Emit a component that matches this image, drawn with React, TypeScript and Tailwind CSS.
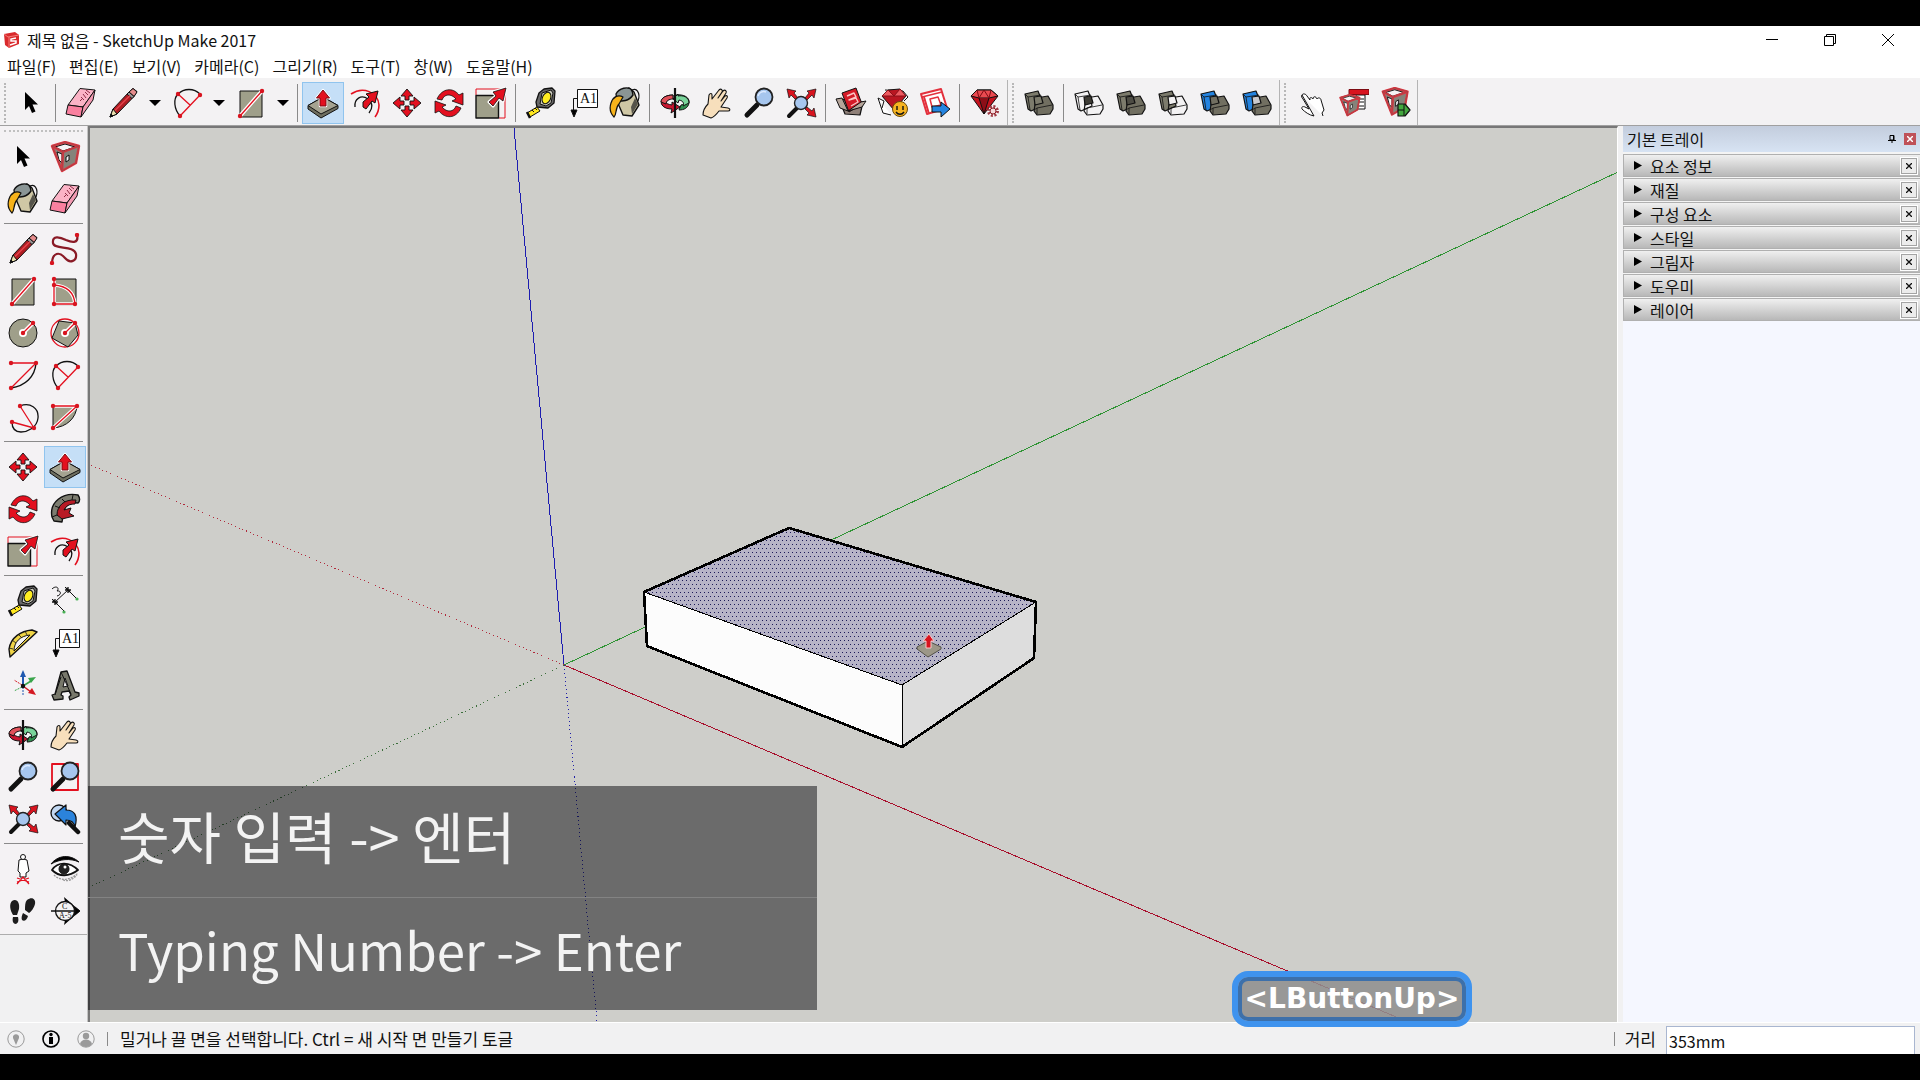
import type { ComponentType, ReactNode } from "react";

const RED = "#e3101f";
const STONE = "#9f9f8a";

function Svg({ children }: { children: ReactNode }) {
  return (
    <svg
      viewBox="0 0 32 32"
      className="h-8 w-8"
      fill="none"
      stroke="#111"
      strokeWidth="1"
      strokeLinejoin="round"
      aria-hidden="true"
    >
      {children}
    </svg>
  );
}

/* Endpoint markers, shared by the drawing tools. */
function Dots({ at }: { at: [number, number][] }) {
  return (
    <>
      {at.map(([x, y]) => (
        <circle key={`${x}-${y}`} cx={x} cy={y} r="2.2" fill="#d8141f" stroke="none" />
      ))}
    </>
  );
}

function Select() {
  return (
    <Svg>
      <path d="M10 5v18l4-4 3 7 3.500-1.500-3-7H23z" fill="#000" stroke="none" />
    </Svg>
  );
}

function Eraser() {
  return (
    <Svg>
      <path d="M15 1.500 30 3 18 20 3 18z" fill="#fbb3c6" />
      <path d="m3 18 15 2-2 10L1 27z" fill="#f9809f" />
      <path d="m30 3-2 10-12 17 2-10z" fill="#f39ab2" />
      <path d="m15 14 2-2m-1-2 3 3m-1-6 3 4m-1-6 3 3m-2-5 4 3" stroke="#8c2d45" />
    </Svg>
  );
}

function Pencil() {
  return (
    <Svg>
      <path d="M22 5 26 1.500 30 4.500 27 9.500 10 27 3 30l3-8z" fill="#b01c22" />
      <path d="m6 22 4 5-7 3z" fill="#eadfae" />
      <path d="m4 27 2 2-3 1z" fill="#111" />
      <path d="m22 5 5 4.500L30 5l-4-3.500z" fill="#e58c8c" />
      <path d="m20 7 5 4.500 2-2L22 5z" fill="#999" />
      <path d="M8 23.500 23 8.500" stroke="#e4434a" strokeWidth="1.500" />
    </Svg>
  );
}

function Freehand() {
  return (
    <Svg>
      <path
        d="M3 29c1-9 7-11 13-4 5 6 12 3 11-4-2-9-22-4-23-11C3 2 11 4 17 7c7 3 13 3 11-5"
        stroke="#8a1a26"
        strokeWidth="2.200"
      />
      <Dots at={[[3, 30], [28, 2]]} />
    </Svg>
  );
}

function Arc() {
  return (
    <Svg>
      <path d="M9 29C3 22 2 12 7 7c6-6 16-6 22 0" strokeWidth="1.300" />
      <path d="M9 29 29 8M7 7l12 11" stroke={RED} strokeWidth="1.300" />
      <Dots at={[[9, 29], [29, 8], [7, 7]]} />
    </Svg>
  );
}

function Rect() {
  return (
    <Svg>
      <path d="M5 4h22v26H5z" fill={STONE} />
      <path d="M5 29 27 4" stroke="#fff" strokeWidth="4" />
      <path d="M5 29 27 4" stroke={RED} strokeWidth="1.300" />
      <Dots at={[[5, 29], [27, 4]]} />
    </Svg>
  );
}

function RotatedRect() {
  return (
    <Svg>
      <path d="M5 4h22v26H5z" fill={STONE} />
      <path d="M5 4v25h21c-1-12-8-18-21-19" stroke="#fff" strokeWidth="3.500" />
      <path d="M5 4v25h21c-1-12-8-18-21-19" stroke={RED} strokeWidth="1.300" />
      <Dots at={[[5, 4], [5, 10], [5, 29], [26, 29]]} />
    </Svg>
  );
}

function Circle() {
  return (
    <Svg>
      <circle cx="16" cy="16" r="14" fill={STONE} />
      <path d="m16 16 10-10" stroke="#fff" strokeWidth="4" />
      <circle cx="16" cy="16" r="4" fill="#fff" stroke="none" />
      <path d="m16 16 10-10" stroke={RED} strokeWidth="1.300" />
      <Dots at={[[16, 16], [26, 6]]} />
    </Svg>
  );
}

function Polygon() {
  return (
    <Svg>
      <circle cx="16" cy="16" r="14" stroke={RED} strokeWidth="1.300" />
      <path d="M10 4 26 6l3 12-10 12L3 21z" fill={STONE} />
      <path d="m16 16 10-10" stroke="#fff" strokeWidth="4" />
      <circle cx="16" cy="16" r="4" fill="#fff" stroke="none" />
      <path d="m16 16 10-10" stroke={RED} strokeWidth="1.300" />
      <Dots at={[[16, 16], [26, 6]]} />
    </Svg>
  );
}

function CenterArc() {
  return (
    <Svg>
      <path d="M29 4c-1 14-11 23-25 25" strokeWidth="1.400" />
      <path d="M4 4h25L4 29" stroke={RED} strokeWidth="1.300" />
      <Dots at={[[4, 4], [29, 4], [4, 29]]} />
    </Svg>
  );
}

function ThreePointArc() {
  return (
    <Svg>
      <path d="M13 5c10-4 19 2 18 12S20 31 14 31 5 27 5 21" strokeWidth="1.300" />
      <path d="M13 5 27 27 5 21" stroke={RED} strokeWidth="1.300" />
      <Dots at={[[13, 5], [27, 27], [5, 21]]} />
    </Svg>
  );
}

function Pie() {
  return (
    <Svg>
      <path d="M4 5h24C27 17 18 26 4 27z" fill={STONE} />
      <path d="M4 5h24L4 27" stroke="#fff" strokeWidth="3.500" />
      <path d="M4 5h24L4 27" stroke={RED} strokeWidth="1.300" />
      <Dots at={[[4, 5], [28, 5], [4, 27]]} />
    </Svg>
  );
}

function PushPull() {
  return (
    <Svg>
      <path d="M1 18.500 16 10l15 8.500v3L14 31 1 22z" fill="#6f6f60" />
      <path d="M1 18.500 16 10l15 8.500L14 27z" fill="#a5a391" />
      <path d="M13 19v-8H9.500L16 3l6.500 8H19v8z" fill={RED} stroke="#fff" strokeWidth="2.500" />
      <path d="M13 19v-8H9.500L16 3l6.500 8H19v8z" fill={RED} stroke="#7d0b12" />
    </Svg>
  );
}

function Offset() {
  return (
    <Svg>
      <path d="M2 7C14-1 29 5 30 18c0 4-1 8-4 12" stroke={RED} strokeWidth="1.600" />
      <path d="M6 20c-1-8 6-13 13-8 5 4 5 9 1 14" strokeWidth="1.300" />
      <path d="m14 15 6-5-3-3 12-3-3 12-3-2-6 8-3-2z" fill={RED} />
    </Svg>
  );
}

function Move() {
  return (
    <Svg>
      <path
        d="M14 13V9h-4l6-7 6 7h-4v4zM14 19v4h-4l6 7 6-7h-4v-4zM13 14H9v-4l-7 6 7 6v-4h4zM19 14h4v-4l7 6-7 6v-4h-4z"
        fill={RED}
        strokeWidth=".9"
      />
    </Svg>
  );
}

function Rotate() {
  return (
    <Svg>
      <path d="M4 12C9 1 20 0 26 8l4-2v12l-11-4 4-2C18 6 11 7 9 13z" fill={RED} strokeWidth=".8" />
      <path d="M28 21c-5 11-16 11-22 3l-4 2V14l11 4-4 2c5 6 12 5 14-1z" fill={RED} strokeWidth=".8" />
    </Svg>
  );
}

function Scale() {
  return (
    <Svg>
      <path d="M1 8V2h29v29H24" stroke={RED} />
      <path d="M1 8.500h22.500V31H1z" fill={STONE} strokeWidth="1.400" />
      <path d="m14 15 7-6-3-4 13-4-3 13-4-3-6 8z" fill={RED} stroke="#fff" strokeWidth="3" />
      <path d="m14 15 7-6-3-4 13-4-3 13-4-3-6 8z" fill={RED} strokeWidth=".8" />
    </Svg>
  );
}

function FollowMe() {
  return (
    <Svg>
      <path d="M3 24C0 9 14-1 29 2c2 3 2 6 0 8-8-1-12 2-14 7l-2 12-8-1z" fill="#7c7c70" strokeWidth="1.400" />
      <path d="M8 22c0-9 7-16 19-15l-1 4c-6 0-9 2-11 6l7-2-2 5 5 3-12 3-5-4z" fill="#b81a25" />
      <path d="m3 24 5-2m-2-9 5 2m2-9 3 3m8-7-1 5" />
    </Svg>
  );
}

function Tape() {
  return (
    <Svg>
      <path d="M14 6 19 2l8-1 3 3-1 12-6 5-11-1-1-5z" fill="#686868" strokeWidth="1.300" />
      <path d="m17 6 9-3 2 3-2 10-5 3-6-2z" fill="#c8c8bb" />
      <ellipse cx="21.500" cy="11" rx="4" ry="6" transform="rotate(25 21.500 11)" fill="#ffed22" />
      <path d="m12 20 3 4L5 30l-3-4z" fill="#ffe71e" />
      <path d="m2 25 3 6" strokeWidth="2.500" />
      <path d="m7 23 2 2m1-4 2 2" />
    </Svg>
  );
}

function Dimension() {
  return (
    <Svg>
      <path d="m6 17 13-12M3 14l12 12M16 2l11 11" />
      <path d="M3 17h6m-3-3v6M16 5h6m-3-3v6M4 15l4 4m9-16 4 4" strokeWidth="1.300" />
      <path d="M3 4c4-4 8-1 5 2 4-1 5 4 0 5" />
      <circle cx="28" cy="14" r="1.600" fill="#48b054" stroke="none" />
      <circle cx="15" cy="27" r="1.600" fill="#48b054" stroke="none" />
    </Svg>
  );
}

function Protractor() {
  return (
    <Svg>
      <path d="M3 30 2 22C4 10 14 4 25 3l5 2z" fill="#efd446" strokeWidth="1.400" />
      <path d="M7 24C7 15 13 9 23 8z" fill="#f4f3f4" />
      <path d="m2 21 4 1m-1-9 4 3m2-9 3 3m4-6 2 4" strokeWidth=".8" />
    </Svg>
  );
}

function TextTool() {
  return (
    <Svg>
      <path d="M10.500 2.500h20v18h-20z" fill="#fff" />
      <path d="M10 11.500H6.500V23" />
      <path d="M4 23h6l-3 7z" fill="#000" />
      <text x="13" y="16" fill="#111" stroke="none" className="font-['Liberation_Serif'] text-[14px]">
        A1
      </text>
    </Svg>
  );
}

function Bucket() {
  return (
    <Svg>
      <path d="M10 6 20 1l5 4 5 13-7 11-9-1L8 14z" fill="#cfc7a5" strokeWidth="1.400" />
      <path d="M7 7c3-6 12-8 16-4l1 5C20 14 13 15 8 13z" fill="#8a9595" strokeWidth="1.400" />
      <path d="m22 20 4-9 3 6-6 10z" fill="#55534a" stroke="none" />
      <path d="M22 4c5-5 10 2 7 10" strokeWidth="1.200" />
      <path d="M14 10C9 7 4 10 2 16c-2 6-1 10 3 14 3-3 1-9 5-13z" fill="#f7b31b" strokeWidth="1.200" />
    </Svg>
  );
}

function Axes() {
  return (
    <Svg>
      <path d="M16 17V6" stroke="#2059b0" strokeWidth="2" />
      <path d="m13 8 3-7 3 7z" fill="#2059b0" stroke="none" />
      <path d="m16 17 8-5" stroke="#3aa54b" strokeWidth="1.500" />
      <path d="m21 9 8-1-5 6z" fill="#3aa54b" stroke="none" />
      <path d="m16 17 8 6" stroke="#d41822" strokeWidth="1.500" />
      <path d="m25 19 4 7-8-2z" fill="#d41822" stroke="none" />
      <path d="M16 18v9" stroke="#2059b0" strokeDasharray="2 1" />
      <path d="m15 18-8 4" stroke="#3aa54b" strokeDasharray="2 1" />
      <path d="m15 16-8-5" stroke="#d41822" strokeDasharray="2 1" />
      <circle cx="16" cy="17" r="2.200" fill="#111" stroke="none" />
    </Svg>
  );
}

function Text3d() {
  return (
    <Svg>
      <path d="m3 26 3-1 6-22 6-1 8 21 4 1v3l-9 4-1-3 2-2-2-4-7 1-1 3 2 1v3l-9 1z" fill="#78786b" strokeWidth="1.300" />
      <path d="m14 18 5-1-3-8z" fill="#f4f2f4" />
      <path d="m12 3 10 22m-16 1 6-18" />
    </Svg>
  );
}

function Orbit() {
  return (
    <Svg>
      <path d="M17 8c7-1 14 2 13 8-1 5-5 7-10 7l2-5c5-1 5-5-4-6z" fill="#2f8f4f" />
      <path d="m19 7-5 5 5 4 1-3c5 1 5 4 4 6l6-3c0-6-6-8-11-7z" fill="#79d49a" />
      <path d="M14 8C5 8 0 13 3 18c2 3 6 4 10 4l-1 4 9-6-8-5v3c-8-1-8-5 1-7z" fill="#c91730" />
      <path d="M14 8C7 8 2 11 2 15l5 2c0-3 3-5 7-5z" fill="#e05059" />
      <path d="M16 1v30" strokeWidth="2.200" />
    </Svg>
  );
}

function Hand() {
  return (
    <Svg>
      <path
        d="M2 28c0-4 2-8 5-11l1-9c1-2 3-2 3 0v4l7-9c2-2 4 0 3 2l-4 6 5-7c2-2 4 0 3 2l-5 8 4-5c2-1 3 0 2 2l-6 9 7 1c3 1 2 3 0 3h-9c-3 4-5 6-8 7z"
        fill="#f7dfbc"
        strokeWidth="1.100"
      />
    </Svg>
  );
}

function Zoom() {
  return (
    <Svg>
      <path d="M14 18 4 28" strokeWidth="5" strokeLinecap="round" />
      <circle cx="21" cy="10" r="8.500" fill="#a6c6ee" stroke="#222" strokeWidth="1.800" />
      <path d="M15 9c1-4 5-5 8-4" stroke="#dceaff" strokeWidth="1.500" />
    </Svg>
  );
}

function ZoomWindow() {
  return (
    <Svg>
      <path d="M3 3h26v26H3z" stroke={RED} strokeWidth="1.800" />
      <path d="M14 18 4 28" strokeWidth="5" strokeLinecap="round" />
      <circle cx="21" cy="10" r="8.500" fill="#a6c6ee" stroke="#222" strokeWidth="1.800" />
    </Svg>
  );
}

function ZoomExtents() {
  return (
    <Svg>
      <path d="M12 21 4 29" strokeWidth="4" strokeLinecap="round" />
      <g fill="#d8141f" strokeWidth=".7">
        <path d="m2 2 9 2-2 2 4 5-2 2-5-5-2 3z" />
        <path d="m31 2-9 2 2 2-4 5 2 2 5-5 2 3z" />
        <path d="m31 30-9-2 2-2-4-4 2-2 5 4 2-3z" />
      </g>
      <circle cx="16" cy="16" r="6.500" fill="#a6c6ee" stroke="#222" strokeWidth="1.400" />
    </Svg>
  );
}

function ZoomPrevious() {
  return (
    <Svg>
      <circle cx="10" cy="10" r="8" fill="#c2d8f2" strokeWidth="1.300" />
      <path d="m20 20 9 9" strokeWidth="4.500" strokeLinecap="round" />
      <path d="m6 11 11-9v5c9 0 12 6 9 17-1-5-4-7-9-7v5z" fill="#2b83dc" strokeWidth="1.200" />
    </Svg>
  );
}

function Warehouse() {
  return (
    <Svg>
      <path d="m4 12 6 15 15 1 3-13z" fill="#8f8078" strokeWidth="1.200" />
      <path d="m7 6 14-5 6 16-13 8z" fill="#d41a27" strokeWidth="1" />
      <path d="m12 9 7-3 2 4-7 3 7-2 2 4-7 4" stroke="#f9c6c6" strokeWidth="1.400" />
      <path d="m1 12 6-1 6 13-8-3zM13 24l14-4 4-6-5 1z" fill="#b5a59a" />
    </Svg>
  );
}

function Extension() {
  return (
    <Svg>
      <path d="m1 11 6 3-2 7m-4-10 5 15 8 2M8 3l18 1 5 6-4 4" fill="#fff" />
      <path d="m5 9 6-6 12-1 6 7-12 14z" fill="#b91621" />
      <path d="M5 9h24l-6-7-6 7-6-6z" fill="#ec5a60" stroke="#8a0f18" />
      <circle cx="23" cy="22" r="7.500" fill="#f6b421" stroke="#6b4a08" />
      <path d="M20 19v4m6-4v4m-7 2c2 3 6 3 8 0" strokeWidth="1.400" />
    </Svg>
  );
}

function Layout() {
  return (
    <Svg>
      <path d="m2 7 20-5 6 19-20 6z" fill="#fff" stroke="#e3303c" strokeWidth="2" />
      <path d="m3 10 20-5M11 12l8-2 3 8-9 2z" stroke="#e3303c" strokeWidth="1.500" />
      <path d="m5 10 5 17" stroke="#e3303c" strokeWidth="2" />
      <path d="M13 19h9v-4l9 7-9 8v-5h-9z" fill="#2484e0" />
    </Svg>
  );
}

function Ruby() {
  return (
    <Svg>
      <path d="m2 9 6-6h14l7 6-14 18z" fill="#c4121e" />
      <path d="m2 9 6-6h14l7 6-9 2H10z" fill="#ea4a50" />
      <path d="m10 11 5 16 5-16" fill="#8d0e17" />
      <path d="m8 3 2 8 5-8 5 8 2-8" stroke="#7d0b12" />
      <circle cx="24" cy="24" r="4.500" stroke="#a03a44" strokeWidth="3" strokeDasharray="2 1.500" fill="#fff" />
      <circle cx="24" cy="24" r="3" stroke="#8c1c25" fill="#f3dadb" />
    </Svg>
  );
}

type SolidProps = { back: string; front: string; middle: string };

function SolidShape({ back, front, middle }: SolidProps) {
  return (
    <Svg>
      <path d="m2 7 13-3 2 5 2 10-11 5-3-2z" fill={back} strokeWidth="1.200" />
      <path d="m2 7 3 3 13-2M5 10l2 13" strokeWidth=".8" />
      <path d="m13 11 12-2 5 9v4l-3 5-13 1-3-4z" fill={front} strokeWidth="1.200" />
      <path d="m11 23 3-2 15-3M14 21v6" strokeWidth=".8" />
      <path d="m11 10 7-1 2 7-8 2z" fill={middle} strokeWidth="1.200" />
    </Svg>
  );
}

const OuterShell = () => <SolidShape back="#7c7b6c" front="#716f61" middle="#7c7b6c" />;
const Intersect = () => <SolidShape back="none" front="none" middle="#3e3d36" />;
const Union = () => <SolidShape back="#7c7b6c" front="#716f61" middle="#4d4c44" />;
const Subtract = () => <SolidShape back="#7c7b6c" front="none" middle="#f4f3f4" />;
const Trim = () => <SolidShape back="#2484e0" front="#716f61" middle="#716f61" />;
const Split = () => <SolidShape back="#2484e0" front="#716f61" middle="#c9c9cc" />;

function Interact() {
  return (
    <Svg>
      <path
        d="M7 8c1-2 4-1 5 1l3 4c-1-3 2-3 3-1 0-3 3-3 4 0 1-2 4-1 4 1l3 10-2 3 1 3m-9 0c-5-1-9-4-12-7-1-2 1-3 3-2l4 2L8 12c-1-1-2-3-1-4z"
        fill="#fff"
        strokeWidth="1"
      />
    </Svg>
  );
}

function CubeFrame() {
  return (
    <>
      <path d="m3 5 13-4 14 4-3 17-14 8z" fill="#85837a" />
      <path d="m6 6 10-3 10 3-12 4z" fill="#f4f3f4" />
      <path d="m8 11 5 2v9l-3-3zM17 16l3-2v5l-3 2z" fill="#f4f3f4" />
      <path d="m3 5 13-4 14 4-3 17-14 8zM3 5l11 6 16-6M14 11l-1 19" stroke="#e0333e" strokeWidth="2.400" />
      <path d="m3 5 13-4 14 4-3 17-14 8zM3 5l11 6 16-6M14 11l-1 19" stroke="#8c4a4c" strokeWidth=".6" />
    </>
  );
}

function MakeComponent() {
  return (
    <Svg>
      <CubeFrame />
    </Svg>
  );
}

function ComponentOptions() {
  return (
    <Svg>
      <path d="M19 8h9v14h-9z" fill="#fff" />
      <path d="M20 12h7m-7 3h7m-7 4h7" />
      <path d="M12 2.500h20v5H12z" fill="#d8141f" stroke="#7d0b12" />
      <g transform="translate(1 7) scale(.72)">
        <CubeFrame />
      </g>
    </Svg>
  );
}

function ComponentAttributes() {
  return (
    <Svg>
      <g transform="translate(1 0) scale(.92)">
        <CubeFrame />
      </g>
      <path d="M19 17h7l5 6-5 6h-7z" fill="#43a83f" strokeWidth="1.200" />
      <path d="M25 17v12m-6-6h6" />
    </Svg>
  );
}

function PositionCamera() {
  return (
    <Svg>
      <path d="m12 7 4-1 4 1 2 11-3 2v4h-6v-4l-2-2z" fill="#fff" />
      <circle cx="16" cy="4" r="2.500" fill="#fff" />
      <path d="m10 31 6-7 6 7M10 25l12 4m0-4-12 4" stroke={RED} strokeWidth="1.200" />
    </Svg>
  );
}

function LookAround() {
  return (
    <Svg>
      <path d="M2 11C9 2 21 1 30 9 21 5 11 6 2 11z" fill="#000" />
      <path d="M3 17c6-9 18-8 26 0-9 7-19 7-26 0z" fill="#fff" strokeWidth="1.800" />
      <circle cx="15" cy="16" r="5" fill="#222" />
      <circle cx="16" cy="14" r="1.500" fill="#fff" stroke="none" />
      <path d="M5 22c7 7 17 5 24-2M14 27c6 2 10-1 14-5" stroke="#999" strokeWidth="1.300" strokeDasharray="2 1" />
    </Svg>
  );
}

function Walk() {
  return (
    <Svg>
      <path
        d="M5 6c5-3 8 2 7 8l-2 6H6C3 15 2 9 5 6zM6 22h5c1 4 0 6-2 7-3 0-4-3-3-7zM20 5c5-4 9-1 8 4-1 4-4 8-6 9l-4-3c0-4 0-8 2-10zM16 18l5 3c-1 4-4 6-6 4-1-2 0-5 1-7z"
        fill="#1d1d1d"
        stroke="none"
      />
    </Svg>
  );
}

function Section() {
  return (
    <Svg>
      <path d="m15 2 16 14-16 14 3-14z" fill="#000" stroke="none" />
      <circle cx="16" cy="16" r="9.500" fill="#f4f3f4" strokeWidth="1.300" />
      <path d="M2 16h28" strokeWidth="1.500" />
      <path d="m26 12 5 4-5 4z" fill="#000" />
      <text x="13" y="14" fill="#111" stroke="none" className="font-['Liberation_Serif'] text-[8px]">
        C
      </text>
      <text x="10" y="23" fill="#111" stroke="none" className="font-['Liberation_Serif'] text-[8px]">
        A-5
      </text>
    </Svg>
  );
}

type Tool = {
  label: string;
  icon: ComponentType;
  active?: boolean;
  menu?: boolean;
};

const MAIN_GROUPS: Tool[][] = [
  [{ label: "선택", icon: Select }],
  [
    { label: "지우개", icon: Eraser },
    { label: "선", icon: Pencil, menu: true },
    { label: "호", icon: Arc, menu: true },
    { label: "직사각형", icon: Rect, menu: true },
  ],
  [
    { label: "밀기/끌기", icon: PushPull, active: true },
    { label: "오프셋", icon: Offset },
    { label: "이동", icon: Move },
    { label: "회전", icon: Rotate },
    { label: "배율", icon: Scale },
  ],
  [
    { label: "줄자", icon: Tape },
    { label: "텍스트", icon: TextTool },
    { label: "페인트통", icon: Bucket },
  ],
  [
    { label: "궤도", icon: Orbit },
    { label: "이동 보기", icon: Hand },
    { label: "확대/축소", icon: Zoom },
    { label: "범위 확대/축소", icon: ZoomExtents },
  ],
  [
    { label: "3D Warehouse", icon: Warehouse },
    { label: "Extension Warehouse", icon: Extension },
    { label: "LayOut", icon: Layout },
  ],
  [{ label: "확장 관리자", icon: Ruby }],
];

const SOLID_GROUPS: Tool[][] = [
  [{ label: "외부 쉘", icon: OuterShell }],
  [
    { label: "교차", icon: Intersect },
    { label: "결합", icon: Union },
    { label: "빼기", icon: Subtract },
    { label: "자르기", icon: Trim },
    { label: "분할", icon: Split },
  ],
];

const DYNAMIC_GROUPS: Tool[][] = [
  [
    { label: "상호 작용", icon: Interact },
    { label: "구성 요소 옵션", icon: ComponentOptions },
    { label: "구성 요소 속성", icon: ComponentAttributes },
  ],
];

const DOCK_GROUPS: Tool[][] = [
  [
    { label: "선택", icon: Select },
    { label: "구성 요소 만들기", icon: MakeComponent },
    { label: "페인트통", icon: Bucket },
    { label: "지우개", icon: Eraser },
  ],
  [
    { label: "선", icon: Pencil },
    { label: "자유형", icon: Freehand },
    { label: "직사각형", icon: Rect },
    { label: "회전된 직사각형", icon: RotatedRect },
    { label: "원", icon: Circle },
    { label: "다각형", icon: Polygon },
    { label: "호", icon: CenterArc },
    { label: "2점 호", icon: Arc },
    { label: "3점 호", icon: ThreePointArc },
    { label: "파이", icon: Pie },
  ],
  [
    { label: "이동", icon: Move },
    { label: "밀기/끌기", icon: PushPull, active: true },
    { label: "회전", icon: Rotate },
    { label: "따라가기", icon: FollowMe },
    { label: "배율", icon: Scale },
    { label: "오프셋", icon: Offset },
  ],
  [
    { label: "줄자", icon: Tape },
    { label: "치수", icon: Dimension },
    { label: "각도기", icon: Protractor },
    { label: "텍스트", icon: TextTool },
    { label: "축", icon: Axes },
    { label: "3D 텍스트", icon: Text3d },
  ],
  [
    { label: "궤도", icon: Orbit },
    { label: "이동 보기", icon: Hand },
    { label: "확대/축소", icon: Zoom },
    { label: "창 확대/축소", icon: ZoomWindow },
    { label: "범위 확대/축소", icon: ZoomExtents },
    { label: "이전", icon: ZoomPrevious },
  ],
  [
    { label: "카메라 배치", icon: PositionCamera },
    { label: "둘러보기", icon: LookAround },
    { label: "걷기", icon: Walk },
    { label: "단면", icon: Section },
  ],
];

const MENUS = ["파일(F)", "편집(E)", "보기(V)", "카메라(C)", "그리기(R)", "도구(T)", "창(W)", "도움말(H)"];

const TRAYS = ["요소 정보", "재질", "구성 요소", "스타일", "그림자", "도우미", "레이어"];

function ToolButton({ tool }: { tool: Tool }) {
  const Icon = tool.icon;
  return (
    <button
      type="button"
      aria-label={tool.label}
      className={`flex h-[42px] w-[42px] shrink-0 items-center justify-center ${
        tool.active ? "border border-[#90c4ee] bg-[#c5dff7]" : ""
      }`}
    >
      <Icon />
    </button>
  );
}

function ToolStrip({ groups }: { groups: Tool[][] }) {
  return (
    <div className="flex h-full items-center border-r border-[#b4b4b4] pr-px">
      <div className="mx-1 h-10 border-l-2 border-dotted border-[#b8b8b8]" />
      {groups.map((group, i) => (
        <div key={i} className="flex items-center">
          {i > 0 && <div className="mr-1 ml-[3px] h-[38px] w-px bg-[#8a8a8a]" />}
          {group.map((tool) => (
            <div key={tool.label} className="flex items-center">
              <ToolButton tool={tool} />
              {tool.menu && (
                <button
                  type="button"
                  aria-label={`${tool.label} 메뉴`}
                  className="flex h-10 w-[22px] items-center justify-center"
                >
                  <svg viewBox="0 0 12 6" className="h-1.5 w-3">
                    <path d="M0 0h12L6 6z" />
                  </svg>
                </button>
              )}
            </div>
          ))}
        </div>
      ))}
    </div>
  );
}

function TitleBar() {
  return (
    <header className="flex h-7 shrink-0 items-center bg-white pl-[3px]">
      <svg viewBox="0 0 18 18" className="h-[18px] w-[18px]">
        <path d="m1 3 11-2 4 3v9l-10 4-4-3z" fill="#d92a2c" />
        <path d="m1 3 4 3 11-2M6 6v11" stroke="#f47c78" fill="none" />
        <path d="M13 7 8 8v2h5v2l-6 2" stroke="#fff" strokeWidth="1.500" fill="none" />
      </svg>
      <h1 className="ml-1.5 flex-1 text-[16px]">제목 없음 - SketchUp Make 2017</h1>
      <button type="button" aria-label="최소화" className="flex h-7 w-[58px] items-center justify-center">
        <svg viewBox="0 0 12 12" className="h-3 w-3" stroke="#000">
          <path d="M0 5.500h12" />
        </svg>
      </button>
      <button type="button" aria-label="이전 크기로" className="flex h-7 w-[58px] items-center justify-center">
        <svg viewBox="0 0 12 12" className="h-3 w-3" stroke="#000" fill="none">
          <path d="M.5 2.500h9v9h-9zM2.500 2.500v-2h9v9h-2" />
        </svg>
      </button>
      <button type="button" aria-label="닫기" className="mr-[3px] flex h-7 w-[58px] items-center justify-center">
        <svg viewBox="0 0 12 12" className="h-3 w-3" stroke="#000">
          <path d="m0 0 12 12M12 0 0 12" />
        </svg>
      </button>
    </header>
  );
}

function Dock() {
  return (
    <aside className="w-[88px] shrink-0 border-r border-[#c4c4c4]">
      <div className="border-b border-[#adadad] bg-[#f4f2f4] px-0.5 pb-0.5">
        <div className="flex h-2.5 items-center px-0.5">
          <div className="w-full border-t-2 border-dotted border-[#c0c0c0]" />
        </div>
        {DOCK_GROUPS.map((group, i) => (
          <div key={i}>
            {i > 0 && <div className="mx-0.5 mt-[3px] mb-1 h-px bg-[#8a8a8a]" />}
            <div className="grid grid-cols-2">
              {group.map((tool) => (
                <ToolButton key={tool.label} tool={tool} />
              ))}
            </div>
          </div>
        ))}
      </div>
    </aside>
  );
}

function Scene() {
  return (
    <svg
      viewBox="90 128 1527 894"
      preserveAspectRatio="xMinYMin slice"
      shapeRendering="crispEdges"
      className="absolute inset-0 h-full w-full"
      fill="none"
      aria-hidden="true"
    >
      <defs>
        <pattern id="selected" width="4" height="8" patternUnits="userSpaceOnUse">
          <rect width="4" height="8" fill="#b7b4c7" />
          <rect width="1" height="1" fill="#1c1a58" />
          <rect x="2" y="4" width="1" height="1" fill="#1c1a58" />
        </pattern>
      </defs>
      <path d="m564 665 1054-493" stroke="#2f9434" />
      <path d="m564 665 844 357" stroke="#a80f2c" />
      <path d="M564 665 514 128" stroke="#1c1cb0" />
      <path d="M564 665 90 465" stroke="#b02a3c" strokeDasharray="1 3" />
      <path d="M564 665 90 887" stroke="#3c6f3c" strokeDasharray="1 3" />
      <path d="m564 665 33 357" stroke="#2020a8" strokeDasharray="1 3" />
      <path d="m644 592 258 93v62L647 646z" fill="#fcfcfc" />
      <path d="m902 685 134-83-2 56-132 89z" fill="#dddddd" />
      <path d="m644 592 145-64 247 74-134 83z" fill="url(#selected)" />
      <path d="m644 592 258 93 134-83M902 685v62" stroke="#000" />
      <path
        d="m644 592 145-64 247 74-2 56-132 89-255-101z"
        stroke="#000"
        strokeWidth="2.600"
        strokeLinejoin="round"
      />
      <g shapeRendering="auto">
        <path d="m917 647 11-6 13 6v2l-13 8-11-8z" fill="#9c9788" stroke="#55534a" />
        <path d="M926 648v-7h-3l6-7 5 7h-3v7z" fill="#d8141f" stroke="#f6c9c9" />
      </g>
    </svg>
  );
}

function Viewport() {
  return (
    <main className="relative min-w-0 flex-1 border-t-2 border-r border-l-2 border-[#777777] border-r-white bg-[#cececa]">
      <Scene />
      <div className="absolute -left-0.5 bottom-3 w-[729px] max-w-full divide-y divide-[#838383] bg-[#08080c7f] text-[#f3f3f3]">
        <p className="flex h-28 items-center px-[30px] pb-3.5 text-[56px]">숫자 입력 -&gt; 엔터</p>
        <p className="flex h-28 items-center px-[30px] pb-2.5 text-[51px]">Typing Number -&gt; Enter</p>
      </div>
      <div className="absolute right-[145px] -bottom-[5px] flex h-14 w-60 items-center justify-center rounded-2xl border-[6px] border-[#3f93ee] bg-[#8f8f8fdd] font-['DejaVu_Sans',sans-serif] text-[28px] font-bold text-white inset-ring-4 inset-ring-[#3d70aa]">
        &lt;LButtonUp&gt;
      </div>
    </main>
  );
}

function Tray() {
  return (
    <aside className="ml-[5px] w-[297px] shrink-0 bg-[#f5f7ff]">
      <div className="flex h-[26px] items-center bg-linear-to-b from-[#c3cddd] to-[#d7e3f3] pr-1 pl-1">
        <h2 className="flex-1 text-[16px] leading-5">기본 트레이</h2>
        <button type="button" aria-label="고정" className="mr-2">
          <svg viewBox="0 0 8 8" className="h-2 w-2" fill="none" stroke="#000">
            <path d="M2 .5h4V5H2zM5.500 0v5M0 5.500h8M4 5v3" />
          </svg>
        </button>
        <button type="button" aria-label="트레이 닫기" className="flex h-3 w-3 items-center justify-center bg-[#bf5158]">
          <svg viewBox="0 0 6 6" className="h-1.5 w-1.5" stroke="#fff" strokeWidth="1.500">
            <path d="m0 0 6 6M6 0 0 6" />
          </svg>
        </button>
      </div>
      <div className="space-y-px bg-[#f4f4f4] pt-0.5">
        {TRAYS.map((name) => (
          <section
            key={name}
            className="flex h-[23px] items-center border border-r-0 border-[#b0b0b0] bg-linear-to-b from-[#f0f0f0] to-[#b8b8b8] pr-[3px]"
          >
            <button type="button" className="flex flex-1 items-center gap-2 pl-2.5 text-left text-[16px] leading-5">
              <svg viewBox="0 0 8 9" className="h-[9px] w-2">
                <path d="M0 0v9l8-4.500z" />
              </svg>
              {name}
            </button>
            <button
              type="button"
              aria-label={`${name} 닫기`}
              className="flex h-4 w-4 items-center justify-center border border-[#a4a4a4] bg-[#ececec] outline outline-white"
            >
              <svg viewBox="0 0 6 6" className="h-1.5 w-1.5" stroke="#111" strokeWidth="1.300">
                <path d="m0 0 6 6M6 0 0 6" />
              </svg>
            </button>
          </section>
        ))}
      </div>
    </aside>
  );
}

function StatusBar() {
  return (
    <footer className="flex h-8 shrink-0 items-center border-t border-white pl-[7px] text-[17px] leading-6">
      <div className="flex items-center gap-[17px]">
        <button type="button" aria-label="지리적 위치">
          <svg viewBox="0 0 18 18" className="h-[18px] w-[18px]">
            <circle cx="9" cy="9" r="8.200" fill="none" stroke="#9a9a9a" />
            <path d="M9 15 6 8c-1-5 7-5 6 0z" fill="#9a9a9a" />
          </svg>
        </button>
        <button type="button" aria-label="제작자">
          <svg viewBox="0 0 18 18" className="h-[18px] w-[18px]">
            <circle cx="9" cy="9" r="8" fill="none" stroke="#000" strokeWidth="1.600" />
            <circle cx="9" cy="4.500" r="1.700" />
            <path d="M7 7h4v7H7z" />
          </svg>
        </button>
        <button type="button" aria-label="로그인">
          <svg viewBox="0 0 18 18" className="h-[18px] w-[18px]">
            <circle cx="9" cy="9" r="8.200" fill="none" stroke="#9a9a9a" />
            <circle cx="9" cy="6" r="3.200" fill="#9a9a9a" />
            <path d="M3 14c1-6 11-6 12 0-3 4-9 4-12 0z" fill="#9a9a9a" />
          </svg>
        </button>
      </div>
      <div className="mx-3 h-3.5 w-px bg-[#8a8a8a]" />
      <p className="flex-1">밀거나 끌 면을 선택합니다. Ctrl = 새 시작 면 만들기 토글</p>
      <div className="mr-2.5 h-3.5 w-px bg-[#8a8a8a]" />
      <label htmlFor="distance">거리</label>
      <input
        id="distance"
        defaultValue="353mm"
        className="mr-[5px] ml-2.5 h-7 w-[249px] self-end border border-b-0 border-[#a9b6d0] bg-white px-0.5 text-[16px]"
      />
    </footer>
  );
}

export default function App() {
  return (
    <div className="flex h-screen flex-col bg-black py-[26px] font-['Noto_Sans_CJK_KR',sans-serif] text-[#111]">
      <div className="flex min-h-0 flex-1 flex-col bg-[#f1f1f2]">
        <TitleBar />
        <nav className="flex h-6 shrink-0 items-center gap-[13px] bg-white pl-[7px] text-[16px]">
          {MENUS.map((menu) => (
            <button key={menu} type="button">
              {menu}
            </button>
          ))}
        </nav>
        <div className="flex h-12 shrink-0 border-b border-[#a0a0a0] bg-[#f3f2f3] pt-0.5">
          <ToolStrip groups={MAIN_GROUPS} />
          <ToolStrip groups={SOLID_GROUPS} />
          <ToolStrip groups={DYNAMIC_GROUPS} />
        </div>
        <div className="flex min-h-0 flex-1">
          <Dock />
          <Viewport />
          <Tray />
        </div>
        <StatusBar />
      </div>
    </div>
  );
}
